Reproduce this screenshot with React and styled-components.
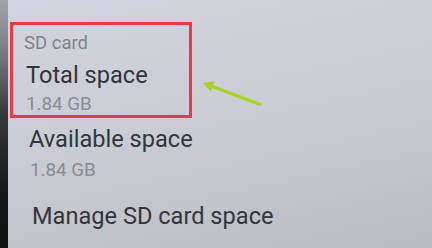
import React from "react";
import styled, { createGlobalStyle } from "styled-components";

const Global = createGlobalStyle`
  html, body { margin: 0; padding: 0; }
  body { width: 432px; height: 248px; overflow: hidden; font-family: Roboto, "Noto Sans", sans-serif; }
`;

const Frame = styled.div`
  position: relative;
  display: flex;
  width: 432px;
  height: 248px;
  overflow: hidden;
`;

const Bezel = styled.div`
  width: 8px;
  flex: none;
  background: linear-gradient(180deg, #a3a5aa 0%, #7c7e83 20%, #3a3b3e 45%, #19191b 75%, #111112 100%);
`;

const Screen = styled.div`
  flex: 1;
  padding: 22px 0 0 2px;
  background: linear-gradient(168deg, #d2d5dd 0%, #cacdd4 45%, #c1c4c9 75%, #b8bbbf 100%);
  display: flex;
  flex-direction: column;
  align-items: flex-start;
`;

const Highlight = styled.div`
  width: 165px;
  height: 82px;
  border: 3px solid #ea3a40;
  padding: 8px 0 0 11px;
  box-sizing: content-box;
  margin-bottom: 7px;
`;

const Category = styled.div`
  font-size: 18.5px;
  line-height: 20px;
  color: #7f828a;
  margin-bottom: 8px;
`;

const Title = styled.div`
  font-size: 23.6px;
  line-height: 28px;
  color: #33363c;
  padding-left: ${(p) => p.$indent || 0}px;
  margin-bottom: ${(p) => p.$gap || 0}px;
  white-space: nowrap;
`;

const Value = styled.div`
  font-size: 18.8px;
  line-height: 22px;
  color: #8a8d93;
  padding-left: ${(p) => p.$indent || 0}px;
  margin-bottom: ${(p) => p.$gap || 0}px;
`;

const Arrow = styled.svg`
  position: absolute;
  left: 198px;
  top: 76px;
  width: 70px;
  height: 36px;
`;

export default function App() {
  return (
    <>
      <Global />
      <Frame>
        <Bezel />
        <Screen>
          <Highlight>
            <Category>SD card</Category>
            <Title $indent={2} $gap={4}>Total space</Title>
            <Value $indent={2}>1.84 GB</Value>
          </Highlight>
          <Title $indent={19} $gap={6}>Available space</Title>
          <Value $indent={20} $gap={21}>1.84 GB</Value>
          <Title $indent={22}>Manage SD card space</Title>
        </Screen>
        <Arrow viewBox="0 0 70 36">
          <path d="M12 9.5 L62 28.5" stroke="#a8d41e" strokeWidth="3" strokeLinecap="round" />
          <path d="M5 7 L16.5 5.2 L12.8 15.5 Z" fill="#a8d41e" />
        </Arrow>
      </Frame>
    </>
  );
}
